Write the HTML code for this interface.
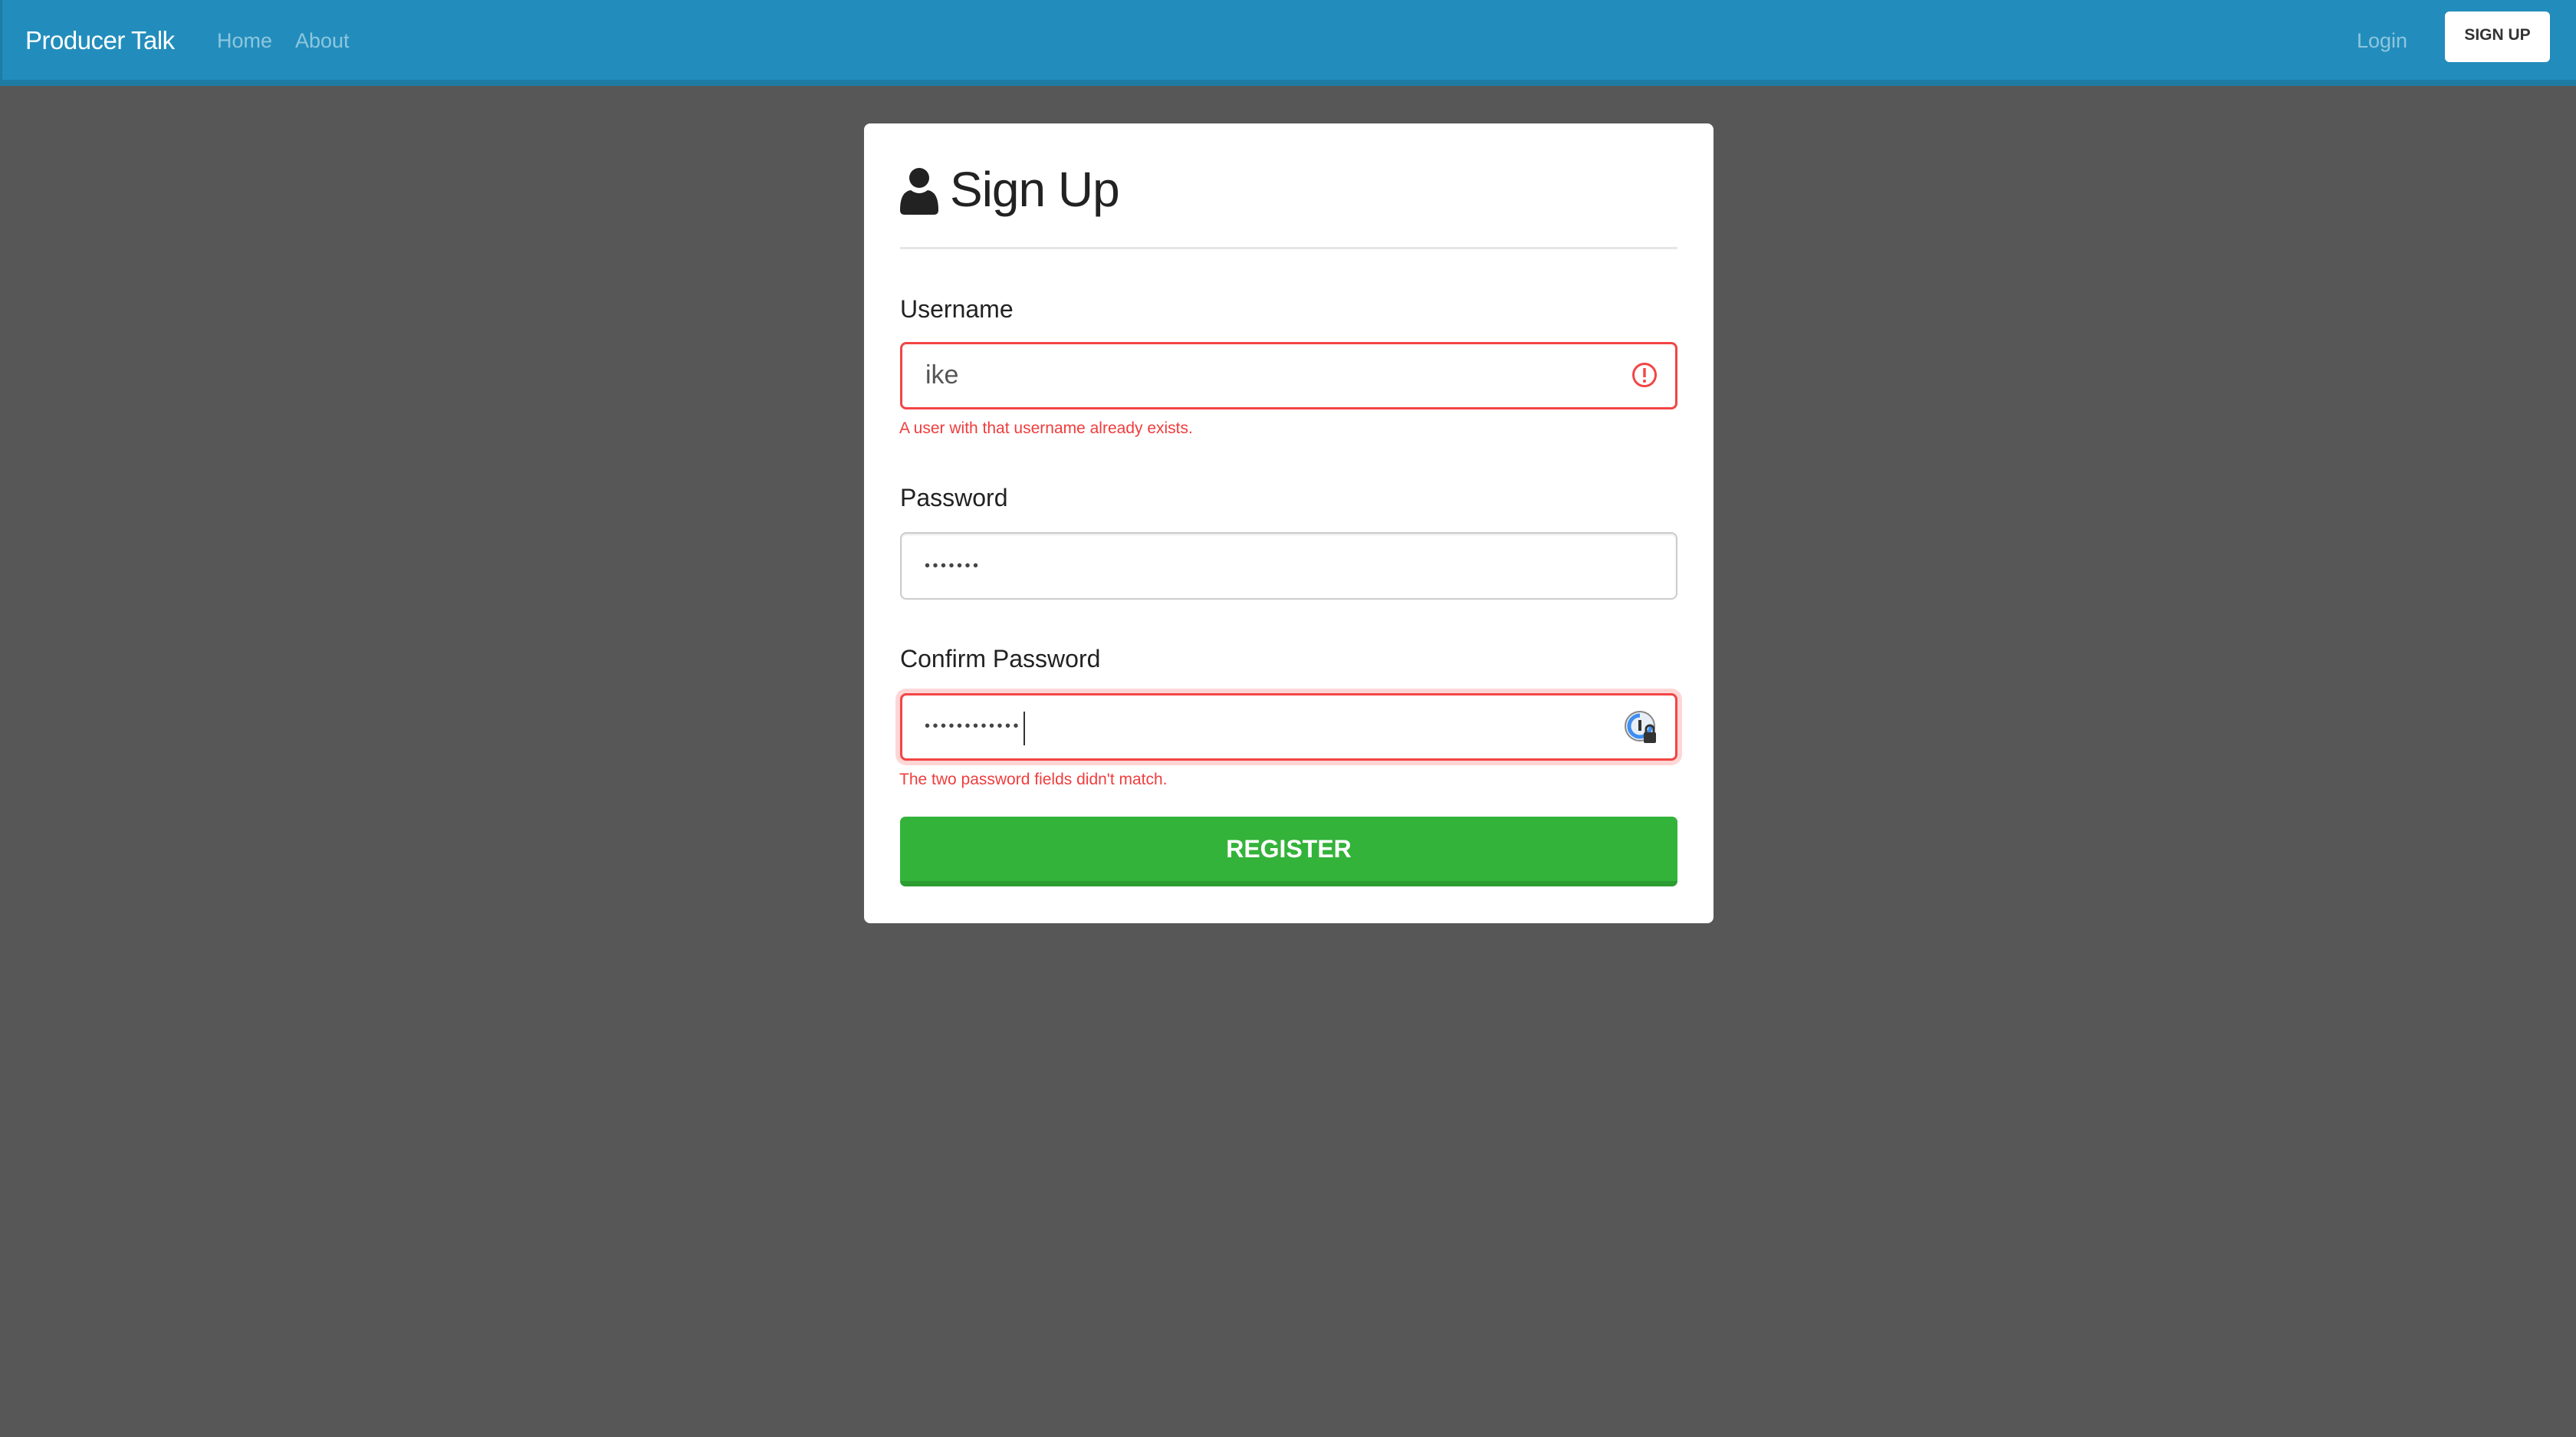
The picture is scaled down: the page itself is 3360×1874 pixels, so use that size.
<!DOCTYPE html>
<html><head><meta charset="utf-8"><style>
*{box-sizing:border-box;margin:0;padding:0}
html,body{width:3360px;height:1874px;overflow:hidden;background:#575757;font-family:"Liberation Sans",sans-serif}
.nav{position:absolute;left:0;top:0;width:3360px;height:112px;background:#228dbc;border-bottom:8px solid #1e7ba3;border-left:3px solid #1e7ba3}
.brand{position:absolute;left:33px;top:34px;font-size:33px;color:#fff;letter-spacing:-0.5px}
.nl{position:absolute;top:38px;font-size:27px;color:#8ec6de}
.su{position:absolute;left:3189px;top:15px;width:137px;height:66px;background:#fff;border-radius:6px;font-weight:bold;font-size:21px;color:#333;text-align:center;line-height:62px}
.card{position:absolute;left:1127px;top:161px;width:1108px;height:1043px;background:#fff;border-radius:8px}
.abs{position:absolute}
h1{position:absolute;left:1239px;top:210px;font-size:64px;font-weight:normal;color:#222;letter-spacing:-1px}
.hr{position:absolute;left:1174px;top:322px;width:1014px;height:3px;background:#e6e6e6}
.lbl{position:absolute;left:1174px;font-size:32px;color:#222}
.inp{position:absolute;left:1174px;width:1014px;height:88px;border-radius:8px;background:#fff}
.err{border:3px solid #f24545}
.ok{border:2px solid #ccc;box-shadow:inset 0 2px 2px rgba(0,0,0,.08)}
.etx{position:absolute;left:1173px;font-size:21px;color:#f03c3c}
.btn{position:absolute;left:1174px;top:1065px;width:1014px;height:91px;background:#34b33a;border-bottom:7px solid #2c9c31;border-radius:7px;color:#fff;font-weight:bold;font-size:32px;text-align:center;line-height:84px}
.dots{position:absolute;left:1206px;font-size:20px;color:#444;letter-spacing:3.5px}
</style></head><body>
<div class="nav"></div>
<div class="brand">Producer Talk</div>
<div class="nl" style="left:283px">Home</div>
<div class="nl" style="left:385px">About</div>
<div class="nl" style="left:3074px">Login</div>
<div class="su">SIGN UP</div>
<div class="card"></div>
<svg class="abs" style="left:1174px;top:218px" width="50" height="62" viewBox="0 0 50 62"><circle cx="25" cy="14" r="13" fill="#222"/><path d="M0 56 Q0 32 14 30 Q25 38 36 30 Q50 32 50 56 Q50 62 44 62 L6 62 Q0 62 0 56Z" fill="#222"/></svg>
<h1>Sign Up</h1>
<div class="hr"></div>
<div class="lbl" style="top:385px">Username</div>
<div class="inp err" style="top:446px"></div>
<div class="abs" style="left:1207px;top:470px;font-size:34px;color:#555">ike</div>
<svg class="abs" style="left:2128px;top:472px" width="34" height="34" viewBox="0 0 34 34"><circle cx="17" cy="17" r="14.5" fill="none" stroke="#f24545" stroke-width="3"/><rect x="15.3" y="8" width="3.4" height="12" fill="#f24545"/><circle cx="17" cy="25" r="2" fill="#f24545"/></svg>
<div class="etx" style="top:547px">A user with that username already exists.</div>
<div class="lbl" style="top:631px">Password</div>
<div class="inp ok" style="top:694px"></div>
<div class="dots" style="top:727px">•••••••</div>
<div class="lbl" style="top:841px">Confirm Password</div>
<div class="inp err" style="top:904px;box-shadow:0 0 0 6px #ffd6d6"></div>
<div class="dots" style="top:936px">••••••••••••</div>
<div class="abs" style="left:1335px;top:928px;width:2px;height:44px;background:#333"></div>
<svg class="abs" style="left:2117px;top:925px" width="48" height="48" viewBox="0 0 48 48"><circle cx="22" cy="22" r="19" fill="#e8eef5" stroke="#888" stroke-width="2"/><path d="M22 8 A14 14 0 1 0 36 22" fill="none" stroke="#3d8ef0" stroke-width="5"/><rect x="20" y="14" width="4" height="14" fill="#333"/><rect x="27" y="30" width="16" height="14" rx="2" fill="#333"/><path d="M30 30 V26 A5 5 0 0 1 40 26 V30" fill="none" stroke="#333" stroke-width="3"/></svg>
<div class="etx" style="top:1005px">The two password fields didn't match.</div>
<div class="btn">REGISTER</div>
</body></html>
